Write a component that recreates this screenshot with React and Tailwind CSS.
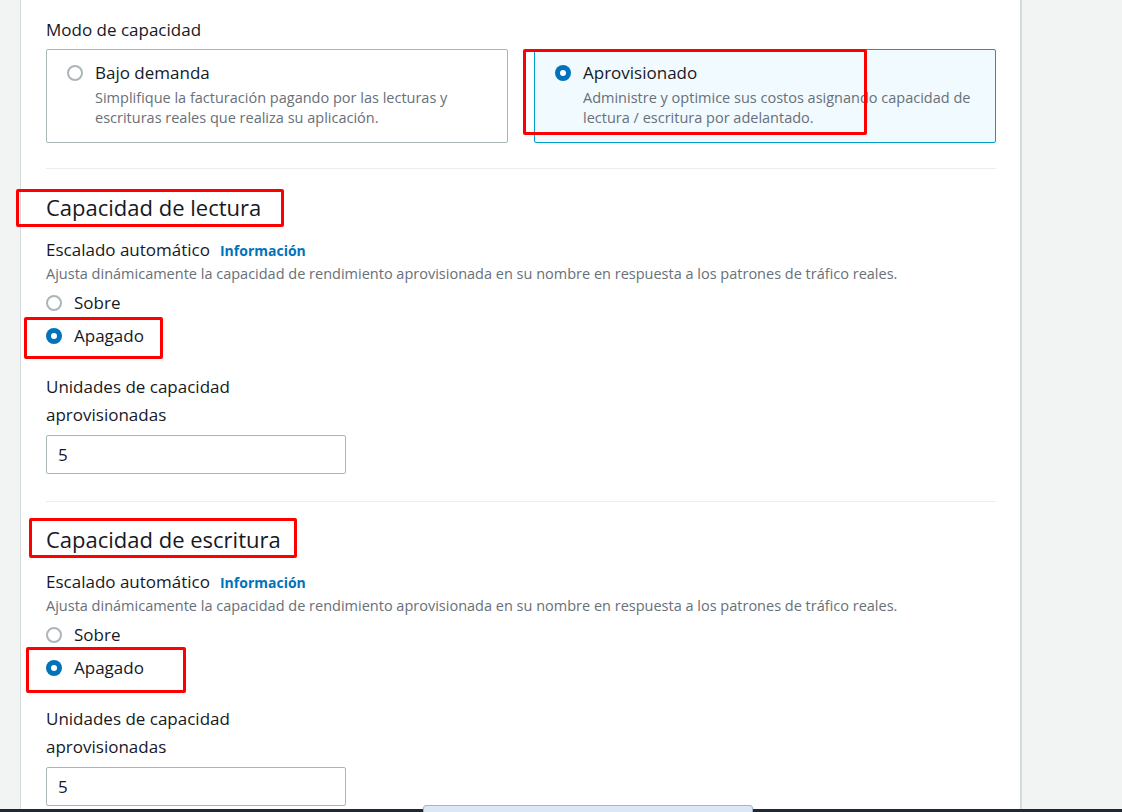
import React from 'react';

const font = { fontFamily: '"Open Sans", "Noto Sans", sans-serif' };

function Radio({ checked }) {
  if (checked) {
    return (
      <span className="w-4 h-4 rounded-full bg-[#0073bb] flex items-center justify-center shrink-0">
        <span className="w-[6px] h-[6px] rounded-full bg-white" />
      </span>
    );
  }
  return <span className="w-4 h-4 rounded-full border-2 border-[#aab7b8] bg-white shrink-0" />;
}

function ModeCard({ checked, title, text }) {
  return (
    <div
      className={`h-[94px] rounded-[2px] border pl-[20px] pr-[18px] pt-[12px] flex gap-[12px] ${
        checked ? 'border-[#00a1c9] bg-[#f1faff]' : 'border-[#aab7b8] bg-white'
      }`}
    >
      <div className="h-[22px] flex items-center">
        <Radio checked={checked} />
      </div>
      <div className="flex-1">
        <div className="text-[17px] leading-[22px] text-[#16191f]">{title}</div>
        <div className="mt-[4px] text-[14.5px] leading-[20px] text-[#687078]">{text}</div>
      </div>
    </div>
  );
}

function CapacitySection({ title, top }) {
  return (
    <div>
      <h2 className={`${top} text-[22px] leading-[28px] text-[#16191f] font-normal`}>{title}</h2>
      <div className="mt-[18px] flex items-baseline gap-[10px] leading-[22px]">
        <span className="text-[17px] text-[#16191f]">Escalado automático</span>
        <span className="text-[14px] font-bold text-[#0073bb]">Información</span>
      </div>
      <div className="mt-[2px] text-[14.5px] leading-[20px] text-[#687078]">
        Ajusta dinámicamente la capacidad de rendimiento aprovisionada en su nombre en respuesta a los patrones de tráfico reales.
      </div>
      <div className="mt-[8px] flex flex-col gap-[11px]">
        <label className="h-[22px] flex items-center gap-[12px] text-[17px] text-[#16191f]">
          <Radio checked={false} />
          Sobre
        </label>
        <label className="h-[22px] flex items-center gap-[12px] text-[17px] text-[#16191f]">
          <Radio checked />
          Apagado
        </label>
      </div>
      <div className="mt-[26px] w-[230px] text-[17px] leading-[28px] text-[#16191f]">
        Unidades de capacidad aprovisionadas
      </div>
      <div className="mt-[6px] w-[300px] h-[39px] rounded-[2px] border border-[#aab7b8] bg-white flex items-center px-[11px] text-[17px] text-[#16191f]">
        5
      </div>
    </div>
  );
}

export default function App() {
  return (
    <div className="relative w-[1122px] h-[812px] overflow-hidden bg-[#f2f3f3] flex flex-col" style={font}>
      <div className="flex-1 flex min-h-0">
        <div className="w-[21px] bg-[#f2f3f3] border-r border-[#d5dbdb]" />
        <div className="w-[1001px] bg-white border-r-2 border-[#d5dbdb] pl-[25px] pr-[25px]">
          <div className="pt-[19px] text-[17px] leading-[22px] text-[#16191f]">Modo de capacidad</div>
          <div className="mt-[8px] grid grid-cols-2 gap-[26px] w-[950px]">
            <ModeCard
              title="Bajo demanda"
              text="Simplifique la facturación pagando por las lecturas y escrituras reales que realiza su aplicación."
            />
            <ModeCard
              checked
              title="Aprovisionado"
              text="Administre y optimice sus costos asignando capacidad de lectura / escritura por adelantado."
            />
          </div>
          <div className="mt-[25px] w-[950px] h-px bg-[#eaeded]" />
          <CapacitySection title="Capacidad de lectura" top="mt-[24px]" />
          <div className="mt-[27px] w-[950px] h-px bg-[#eaeded]" />
          <CapacitySection title="Capacidad de escritura" top="mt-[23px]" />
        </div>
        <div className="flex-1 bg-[#f2f3f3]" />
      </div>
      <div className="h-[3px] bg-[#1f2933]" />

      {/* taskbar thumbnail peeking in */}
      <div className="absolute left-[423px] top-[805px] w-[330px] h-[10px] rounded-t-[3px] border border-[#9fb4d2] bg-[#dce7f5]" />

      {/* red annotation boxes */}
      <div className="absolute left-[523px] top-[49px] w-[344px] h-[86px] border-[3px] border-[#ff0000] rounded-[2px]" />
      <div className="absolute left-[16px] top-[189px] w-[268px] h-[38px] border-[3px] border-[#ff0000] rounded-[2px]" />
      <div className="absolute left-[24px] top-[317px] w-[139px] h-[42px] border-[3px] border-[#ff0000] rounded-[2px]" />
      <div className="absolute left-[29px] top-[518px] w-[268px] h-[40px] border-[3px] border-[#ff0000] rounded-[2px]" />
      <div className="absolute left-[26px] top-[647px] w-[160px] h-[46px] border-[3px] border-[#ff0000] rounded-[2px]" />
    </div>
  );
}
